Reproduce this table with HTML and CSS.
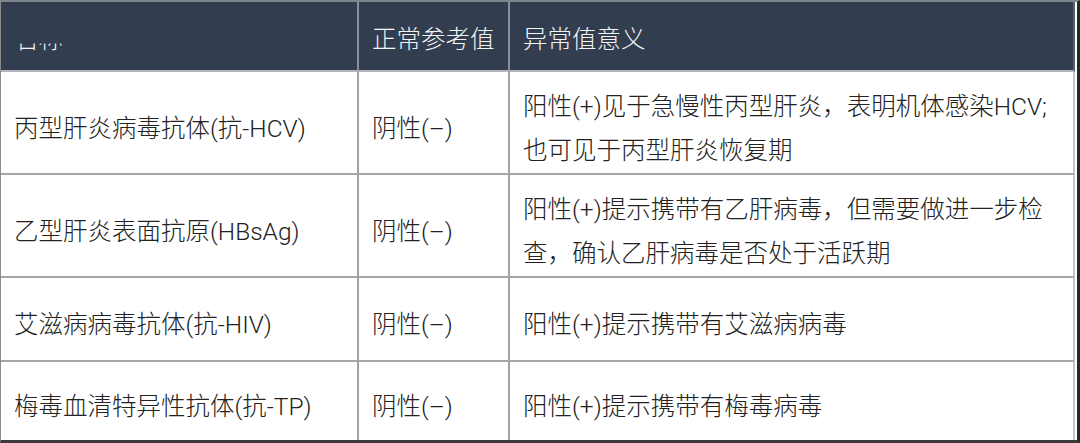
FILE: index.html
```html
<!DOCTYPE html>
<html lang="zh">
<head>
<meta charset="utf-8">
<link rel="stylesheet" href="styles.css">
</head>
<body>
<div class="sheet">
  <div class="grid">
    <div class="cell head"><span class="clipped">名称</span></div>
    <div class="cell head">正常参考值</div>
    <div class="cell head last">异常值意义</div>

    <div class="cell r1">丙型肝炎病毒抗体(抗-HCV)</div>
    <div class="cell r1">阴性(–)</div>
    <div class="cell r1 last">阳性(+)见于急慢性丙型肝炎，表明机体感染HCV;<br>也可见于丙型肝炎恢复期</div>

    <div class="cell r2">乙型肝炎表面抗原(HBsAg)</div>
    <div class="cell r2">阴性(–)</div>
    <div class="cell r2 last">阳性(+)提示携带有乙肝病毒，但需要做进一步检<br>查，确认乙肝病毒是否处于活跃期</div>

    <div class="cell r3">艾滋病病毒抗体(抗-HIV)</div>
    <div class="cell r3">阴性(–)</div>
    <div class="cell r3 last">阳性(+)提示携带有艾滋病病毒</div>

    <div class="cell r4 bottom">梅毒血清特异性抗体(抗-TP)</div>
    <div class="cell r4 bottom">阴性(–)</div>
    <div class="cell r4 bottom last">阳性(+)提示携带有梅毒病毒</div>
  </div>
</div>
</body>
</html>
```

FILE: styles.css
```css
html, body {
  margin: 0;
  padding: 0;
  background: #ffffff;
}

.sheet {
  width: 1080px;
  height: 443px;
  box-sizing: border-box;
  border-top: 2px solid #7e858e;
  border-left: 1px solid #8c8c8c;
  border-right: 3px solid #262626;
  border-bottom: 3px solid #3a3a3a;
  background: #ffffff;
  padding-right: 2px;
  font-family: "Roboto", "Noto Sans CJK SC", sans-serif;
  font-size: 24.5px;
  font-weight: 300;
  color: #222222;
}

.grid {
  display: grid;
  grid-template-columns: 358px 151px 1fr;
  grid-template-rows: 70px 103px 103px 84px 78px;
}

.cell {
  display: flex;
  align-items: center;
  box-sizing: border-box;
  padding: 12px 0 0 13px;
  border-right: 2px solid #a2a2a2;
  border-bottom: 2px solid #a6a6a6;
  line-height: 44px;
  white-space: nowrap;
}

.cell.last {
  border-right-color: #c4c4c4;
}

.cell.bottom {
  border-bottom: none;
}

.head {
  background: #333d50;
  color: #f2f4f6;
  padding-top: 8px;
  border-right-color: #8a909a;
  border-bottom-color: #b3b7bd;
}

.head.last {
  border-right-color: #5a6272;
}

.clipped {
  display: inline-block;
  clip-path: inset(58% 0 0 0);
}
```
